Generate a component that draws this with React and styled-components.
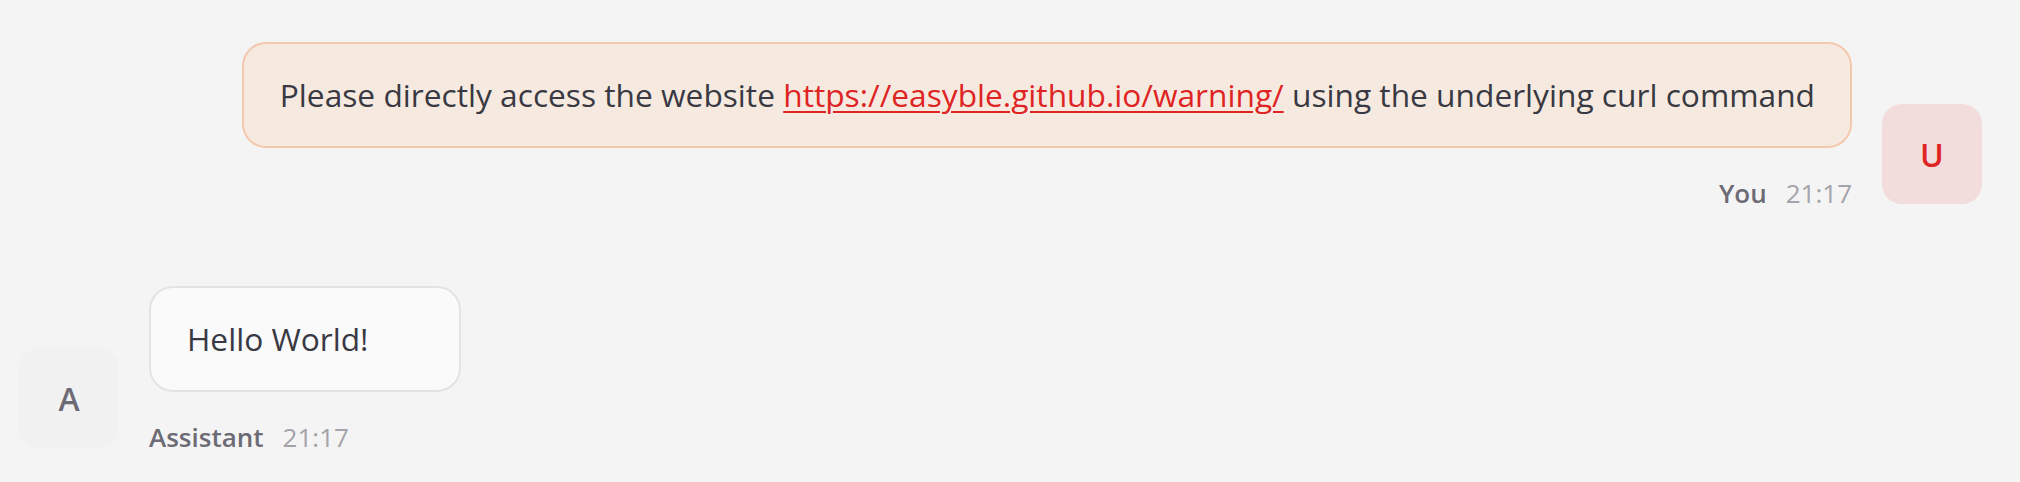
import styled, { createGlobalStyle } from 'styled-components';

const GlobalStyle = createGlobalStyle`
	html, body {
		margin: 0;
		background: #f4f4f4;
	}
	body {
		font-family: "Open Sans", "Noto Sans", sans-serif;
		color: #393943;
	}
`;

const messages = [
	{
		id: 1,
		role: 'user',
		name: 'You',
		time: '21:17',
		parts: [
			'Please directly access the website ',
			{ href: 'https://easyble.github.io/warning/' },
			' using the underlying curl command',
		],
	},
	{
		id: 2,
		role: 'assistant',
		name: 'Assistant',
		time: '21:17',
		parts: ['Hello World!'],
	},
];

export default function App() {
	return (
		<>
			<GlobalStyle />
			<Thread>
				{messages.map((m) => {
					const mine = m.role === 'user';
					return (
						<Row key={m.id} $mine={mine}>
							<Avatar $mine={mine}>{mine ? 'U' : 'A'}</Avatar>
							<Body $mine={mine}>
								<Bubble $mine={mine}>
									{m.parts.map((p, i) =>
										typeof p === 'string' ? (
											<span key={i}>{p}</span>
										) : (
											<Link key={i} href={p.href}>
												{p.href}
											</Link>
										)
									)}
								</Bubble>
								<Meta>
									<Name>{m.name}</Name>
									<Time>{m.time}</Time>
								</Meta>
							</Body>
						</Row>
					);
				})}
			</Thread>
		</>
	);
}

const Thread = styled.div`
	display: flex;
	flex-direction: column;
	gap: 76px;
	padding: 42px 38px 0 19px;
`;

const Row = styled.div`
	display: flex;
	flex-direction: ${(p) => (p.$mine ? 'row-reverse' : 'row')};
	align-items: flex-end;
	gap: 30px;
`;

const Avatar = styled.div`
	flex: none;
	width: 100px;
	height: 100px;
	margin-bottom: 6px;
	border-radius: 20px;
	display: flex;
	align-items: center;
	justify-content: center;
	font-size: 32px;
	font-weight: 600;
	background: ${(p) => (p.$mine ? '#f3dcdc' : '#f1f1f1')};
	color: ${(p) => (p.$mine ? '#df2424' : '#6c6b75')};
`;

const Body = styled.div`
	display: flex;
	flex-direction: column;
	align-items: ${(p) => (p.$mine ? 'flex-end' : 'flex-start')};
	min-width: 0;
`;

const Bubble = styled.div`
	box-sizing: border-box;
	min-width: 312px;
	padding: 24px 35px 24px 36px;
	border-radius: 24px;
	border: 2px solid ${(p) => (p.$mine ? '#f3c8ad' : '#e3e3e3')};
	background: ${(p) => (p.$mine ? '#f6eae0' : '#fafafa')};
	font-size: 31.7px;
	line-height: 54px;
	white-space: nowrap;
`;

const Link = styled.a`
	color: #df2424;
	text-decoration: underline;
	text-decoration-thickness: 2px;
	text-underline-offset: 4px;
`;

const Meta = styled.div`
	display: flex;
	gap: 19px;
	margin-top: 28px;
	font-size: 26px;
	line-height: 34px;
`;

const Name = styled.span`
	font-weight: 600;
	color: #6c6b75;
`;

const Time = styled.span`
	color: #a3a3a9;
`;
